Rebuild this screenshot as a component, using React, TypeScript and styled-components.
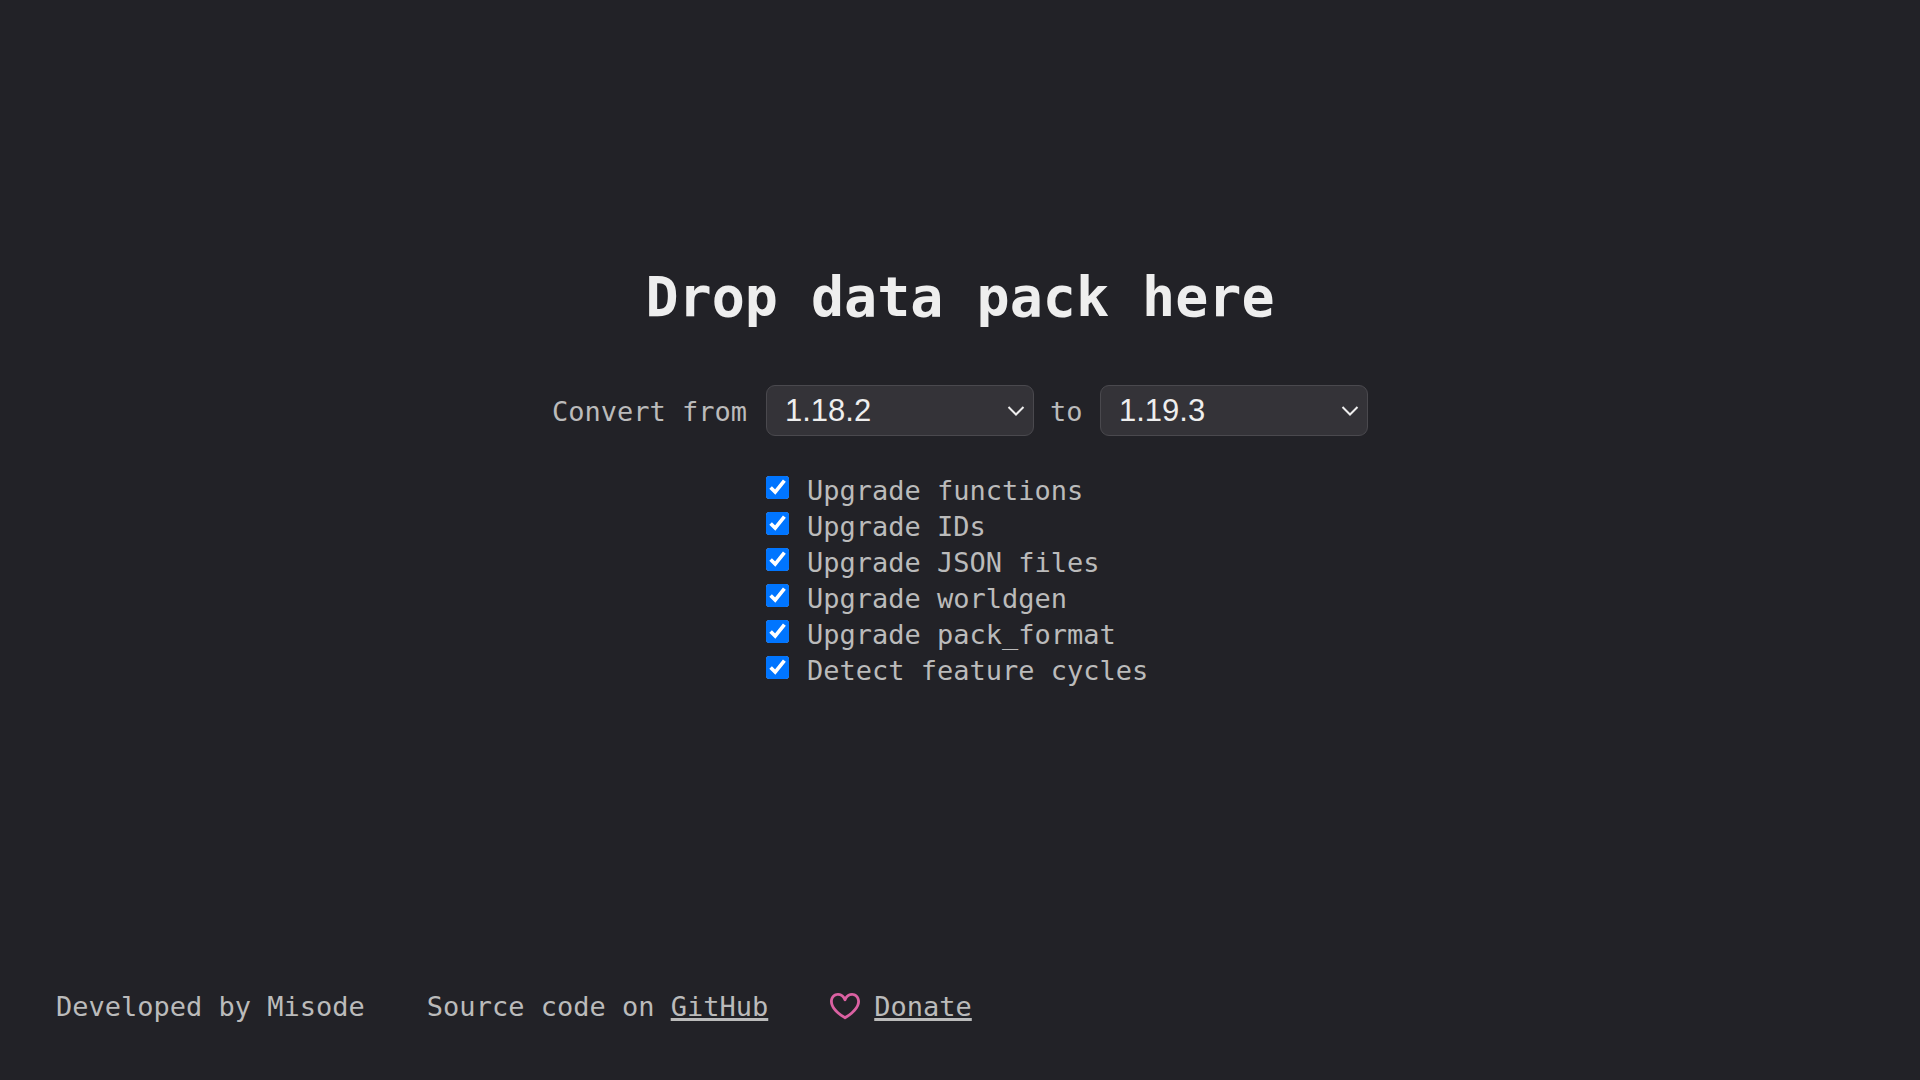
import React, { useState } from 'react';
import styled, { createGlobalStyle } from 'styled-components';

const GlobalStyle = createGlobalStyle`
  * {
    box-sizing: border-box;
  }

  body {
    margin: 0;
    background: #222227;
    color: #bbbbbb;
    font: 27px/36px "DejaVu Sans Mono", monospace;
  }
`;

const Page = styled.div`
  display: flex;
  flex-direction: column;
  min-height: 100vh;
`;

const Main = styled.main`
  flex: 1;
  display: flex;
  flex-direction: column;
  align-items: center;
  justify-content: center;
  padding: 0 24px;
`;

const Title = styled.h1`
  margin: 0 0 58px;
  color: #eeeeee;
  font-size: 55px;
  line-height: 60px;
  font-weight: bold;
  text-align: center;
`;

const VersionRow = styled.div`
  display: flex;
  flex-wrap: wrap;
  align-items: baseline;
  gap: 16px;
  margin-bottom: 37px;
`;

const VersionLabel = styled.label<{ $width: number }>`
  min-width: ${(p) => p.$width}px;
`;

const SelectBox = styled.div`
  display: grid;
  grid-template-columns: 1fr 32px;
  align-items: center;
  width: 268px;
`;

const Select = styled.select`
  grid-area: 1 / 1 / 2 / 3;
  appearance: none;
  height: 51px;
  padding: 0 40px 0 18px;
  border: 1px solid #4a494e;
  border-radius: 9px;
  background: #343338;
  color: #eeeeee;
  font: 31px "Liberation Sans", Arial, sans-serif;
`;

const Chevron = styled.svg`
  grid-area: 1 / 2 / 2 / 3;
  width: 18px;
  height: 12px;
  margin-left: 5px;
  pointer-events: none;
`;

const Options = styled.ul`
  min-width: 388px;
  margin: 0;
  padding: 0;
  list-style: none;
`;

const Option = styled.li`
  display: flex;
  gap: 18px;
`;

const Checkbox = styled.input`
  width: 23px;
  height: 23px;
  margin: 3px 0 0;
  accent-color: #0075ff;
  clip-path: inset(0 round 3px);
`;

const Footer = styled.footer`
  display: flex;
  flex-wrap: wrap;
  gap: 0 62px;
  padding: 33px 56px 55px;
`;

const Credit = styled.div`
  display: flex;
  align-items: center;
  gap: 14px;
`;

const Link = styled.a`
  color: inherit;
  text-decoration: underline;
  text-decoration-thickness: 3px;
  text-underline-offset: 2px;
  text-decoration-skip-ink: none;
`;

const HeartIcon = styled.svg`
  width: 30px;
  height: 30px;
  margin-bottom: 2px;
  fill: #db61a2;
`;

const VERSIONS = ['1.16.5', '1.17.1', '1.18.1', '1.18.2', '1.19', '1.19.3'];

const FEATURES = [
  { id: 'functions', label: 'Upgrade functions' },
  { id: 'ids', label: 'Upgrade IDs' },
  { id: 'json', label: 'Upgrade JSON files' },
  { id: 'worldgen', label: 'Upgrade worldgen' },
  { id: 'pack_format', label: 'Upgrade pack_format' },
  { id: 'cycles', label: 'Detect feature cycles' },
];

function VersionSelect({ id, initial }: { id: string; initial: string }) {
  const [value, setValue] = useState(initial);
  return (
    <SelectBox>
      <Select id={id} value={value} onChange={(e) => setValue(e.target.value)}>
        {VERSIONS.map((v) => (
          <option key={v}>{v}</option>
        ))}
      </Select>
      <Chevron viewBox="0 0 18 12" aria-hidden="true">
        <path d="M1.5 2 9 9.5 16.5 2" fill="none" stroke="#eeeeee" strokeWidth="2" />
      </Chevron>
    </SelectBox>
  );
}

export default function App() {
  return (
    <Page>
      <GlobalStyle />
      <Main>
        <Title>Drop data pack here</Title>
        <VersionRow>
          <VersionLabel htmlFor="source" $width={198}>Convert from</VersionLabel>
          <VersionSelect id="source" initial="1.18.2" />
          <VersionLabel htmlFor="target" $width={34}>to</VersionLabel>
          <VersionSelect id="target" initial="1.19.3" />
        </VersionRow>
        <Options>
          {FEATURES.map((f) => (
            <Option key={f.id}>
              <Checkbox type="checkbox" id={f.id} defaultChecked />
              <label htmlFor={f.id}>{f.label}</label>
            </Option>
          ))}
        </Options>
      </Main>
      <Footer>
        <Credit>Developed by Misode</Credit>
        <Credit>
          <span>
            Source code on <Link href="#github">GitHub</Link>
          </span>
        </Credit>
        <Credit>
          <HeartIcon viewBox="0 0 16 16" aria-hidden="true">
            <path
              fillRule="evenodd"
              d="M4.25 2.5c-1.336 0-2.75 1.164-2.75 3 0 2.15 1.58 4.144 3.365 5.682A20.565 20.565 0 008 13.393a20.561 20.561 0 003.135-2.211C12.92 9.644 14.5 7.65 14.5 5.5c0-1.836-1.414-3-2.75-3-1.373 0-2.609.986-3.029 2.456a.75.75 0 01-1.442 0C6.859 3.486 5.623 2.5 4.25 2.5zM8 14.25l-.345.666-.002-.001-.006-.003-.018-.01a7.643 7.643 0 01-.31-.17 22.075 22.075 0 01-3.434-2.414C2.045 10.731 0 8.35 0 5.5 0 2.836 2.086 1 4.25 1 5.797 1 7.153 1.802 8 3.02 8.847 1.802 10.203 1 11.75 1 13.914 1 16 2.836 16 5.5c0 2.85-2.045 5.231-3.885 6.818a22.08 22.08 0 01-3.744 2.584l-.018.01-.006.003h-.002L8 14.25zm0 0l.345.666a.752.752 0 01-.69 0L8 14.25z"
            />
          </HeartIcon>
          <Link href="#donate">Donate</Link>
        </Credit>
      </Footer>
    </Page>
  );
}
